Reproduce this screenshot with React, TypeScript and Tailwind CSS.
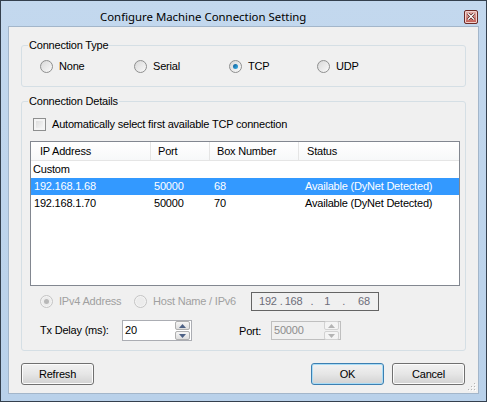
import React from 'react';

const ui = "font-['Liberation_Sans',Arial,sans-serif] text-[11px] tracking-[-0.2px] text-black";

const Radio = ({ checked = false, disabled = false }: { checked?: boolean; disabled?: boolean }) => (
  <span
    className={`relative flex h-[13px] w-[13px] shrink-0 items-center justify-center rounded-full border ${
      disabled ? 'border-[#c4c4c4] bg-[#f4f4f4]' : 'border-[#8e8f8f] bg-gradient-to-br from-[#d6d6d6] to-[#fbfbfb]'
    }`}
  >
    <span
      className={`h-[9px] w-[9px] rounded-full ${
        disabled ? 'bg-[#ececec]' : 'bg-gradient-to-br from-[#dcdcdc] to-[#f6f6f6]'
      } flex items-center justify-center`}
    >
      {checked && (
        <span
          className={`h-[5px] w-[5px] rounded-full ${
            disabled ? 'bg-[#b8b8b8]' : 'bg-gradient-to-br from-[#0e5a92] to-[#3ab4ee]'
          }`}
        />
      )}
    </span>
  </span>
);

const RadioItem = ({ label, width, checked, disabled }: { label: string; width: string; checked?: boolean; disabled?: boolean }) => (
  <div className={`flex items-center gap-[6px] ${width}`}>
    <Radio checked={checked} disabled={disabled} />
    <span className={`leading-[13px] ${disabled ? 'text-[#a0a0a0]' : ''}`}>{label}</span>
  </div>
);

const Spinner = ({ disabled = false }: { disabled?: boolean }) => {
  const arrow = disabled ? '#b4b4b4' : '#4d6185';
  const btn = `flex h-[9px] w-[15px] items-center justify-center rounded-[2px] border ${
    disabled ? 'border-[#d2d2d2] bg-[#f4f4f4]' : 'border-[#b0b0b0] bg-gradient-to-b from-[#f6f6f6] to-[#dedede]'
  }`;
  return (
    <div className="flex flex-col gap-[1px] pr-[1px]">
      <div className={btn}>
        <svg width="7" height="4" viewBox="0 0 7 4">
          <path d="M0 4 L3.5 0 L7 4 Z" fill={arrow} />
        </svg>
      </div>
      <div className={btn}>
        <svg width="7" height="4" viewBox="0 0 7 4">
          <path d="M0 0 L3.5 4 L7 0 Z" fill={arrow} />
        </svg>
      </div>
    </div>
  );
};

const Button = ({ label, isDefault = false }: { label: string; isDefault?: boolean }) => (
  <div
    className={`flex h-[22px] w-[73px] items-center justify-center rounded-[3px] border ${
      isDefault ? 'border-[#3c7fb1] shadow-[inset_0_0_0_1px_#a9dcf6]' : 'border-[#707070] shadow-[inset_0_0_0_1px_#fcfcfc]'
    } bg-gradient-to-b from-[#f2f2f2] via-[#e6e6e6] to-[#d2d2d2]`}
  >
    <span className="text-[11px] leading-none">{label}</span>
  </div>
);

const rows = [
  { ip: '192.168.1.68', port: '50000', box: '68', status: 'Available (DyNet Detected)', selected: true },
  { ip: '192.168.1.70', port: '50000', box: '70', status: 'Available (DyNet Detected)', selected: false },
];

export default function App() {
  return (
    <div className={`${ui} flex h-[402px] w-[487px] flex-col border border-[#34404e] bg-gradient-to-b from-[#c3d8ee] to-[#b9d1ea] px-[7px] pb-[7px]`}>
      {/* title bar */}
      <div className="flex h-[25px] shrink-0 items-center pt-[6px]">
        <span className="ml-[92px] font-['Noto_Sans',sans-serif] text-[11.4px] tracking-normal text-black">
          Configure Machine Connection Setting
        </span>
        <div className="ml-auto mr-[1px] flex h-[14px] w-[14px] items-center justify-center rounded-[2px] border border-[#6b2a26] bg-gradient-to-b from-[#e4b4b0] to-[#c05a52] shadow-[inset_0_0_0_1px_#f1d0cc]">
          <svg width="8" height="7" viewBox="0 0 8 7">
            <path d="M1 0.5 L7 6.5 M7 0.5 L1 6.5" stroke="#4a1a18" strokeWidth="2.6" />
            <path d="M1 0.5 L7 6.5 M7 0.5 L1 6.5" stroke="#ffffff" strokeWidth="1.4" />
          </svg>
        </div>
      </div>

      {/* client */}
      <div className="relative flex flex-1 flex-col border border-[#a3b6ca] bg-[#f0f0f0] px-[12px]">
        <fieldset className="mt-[12px] rounded-[3px] border border-[#d5dfe5] px-0 pb-[13px] pt-[8px]">
          <legend className="ml-[6px] px-[1px] leading-[13px]">Connection Type</legend>
          <div className="flex items-center pl-[18px]">
            <RadioItem label="None" width="w-[94px]" />
            <RadioItem label="Serial" width="w-[95px]" />
            <RadioItem label="TCP" width="w-[88px]" checked />
            <RadioItem label="UDP" width="w-[60px]" />
          </div>
        </fieldset>

        <fieldset className="mt-[8px] rounded-[3px] border border-[#d5dfe5] px-0 pb-[9px] pt-[10px]">
          <legend className="ml-[6px] px-[1px] leading-[13px]">Connection Details</legend>

          <div className="pl-[8px]">
            <div className="ml-[3px] flex items-center gap-[6px]">
              <span className="h-[13px] w-[13px] border border-[#8e8f8f] bg-gradient-to-br from-[#d8d8d8] to-[#fbfbfb] shadow-[inset_0_0_0_2px_#f4f4f4]" />
              <span className="leading-[13px]">Automatically select first available TCP connection</span>
            </div>

            <div className="mt-[10px] flex h-[145px] w-[430px] flex-col border border-[#828790] bg-white">
              <div className="grid h-[19px] grid-cols-[120px_59px_89px_1fr] border-b border-[#e5e5e5] bg-gradient-to-b from-white to-[#f7f8f9]">
                <div className="flex items-center border-r border-[#e5e5e5] pl-[9px]">IP Address</div>
                <div className="flex items-center border-r border-[#e5e5e5] pl-[7px]">Port</div>
                <div className="flex items-center border-r border-[#e5e5e5] pl-[7px]">Box Number</div>
                <div className="flex items-center pl-[8px]">Status</div>
              </div>
              <div className="flex h-[17px] items-center pl-[2px]">Custom</div>
              {rows.map((r) => (
                <div
                  key={r.ip}
                  className={`grid h-[17px] grid-cols-[120px_60px_90px_1fr] items-center ${
                    r.selected ? 'bg-[#3399ff] text-white' : ''
                  }`}
                >
                  <span className="pl-[3px]">{r.ip}</span>
                  <span className="pl-[3px]">{r.port}</span>
                  <span className="pl-[3px]">{r.box}</span>
                  <span className="pl-[4px]">{r.status}</span>
                </div>
              ))}
            </div>

            <div className="mt-[6px] flex h-[19px] items-center pl-[10px]">
              <RadioItem label="IPv4 Address" width="w-[94px]" checked disabled />
              <RadioItem label="Host Name / IPv6" width="w-[117px]" disabled />
              <div className="flex h-[19px] w-[128px] items-center border border-[#646464] bg-[#f0f0f0] pl-[7px] text-[#6c6c78]">
                <span>192</span>
                <span className="ml-[3px]">.</span>
                <span className="ml-[2px]">168</span>
                <span className="ml-[8px]">.</span>
                <span className="ml-[11px]">1</span>
                <span className="ml-[12px]">.</span>
                <span className="ml-[13px]">68</span>
              </div>
            </div>

            <div className="mt-[9px] flex h-[21px] items-center pl-[10px]">
              <span className="w-[82px]">Tx Delay (ms):</span>
              <div className="flex h-[21px] w-[70px] items-center justify-between border border-[#abadb3] bg-white pl-[2px]">
                <span>20</span>
                <Spinner />
              </div>
              <span className="ml-[47px] mt-[2px] w-[32px]">Port:</span>
              <div className="flex h-[19px] w-[70px] items-center justify-between border border-[#bfbfbf] bg-[#f0f0f0] pl-[2px] text-[#8d8d8d]">
                <span>50000</span>
                <Spinner disabled />
              </div>
            </div>
          </div>
        </fieldset>

        <div className="mt-[12px] flex items-center">
          <Button label="Refresh" />
          <div className="ml-auto flex gap-[8px] pr-[1px]">
            <Button label="OK" isDefault />
            <Button label="Cancel" />
          </div>
        </div>

        {/* size grip */}
        <svg className="absolute bottom-[2px] right-[2px]" width="9" height="9" viewBox="0 0 9 9">
          {[
            [7, 1],
            [4, 4],
            [7, 4],
            [1, 7],
            [4, 7],
            [7, 7],
          ].map(([x, y]) => (
            <g key={`${x}-${y}`}>
              <rect x={x} y={y} width="1" height="1" fill="#b4b4b4" />
              <rect x={x + 1} y={y + 1} width="1" height="1" fill="#ffffff" />
            </g>
          ))}
        </svg>
      </div>
    </div>
  );
}
